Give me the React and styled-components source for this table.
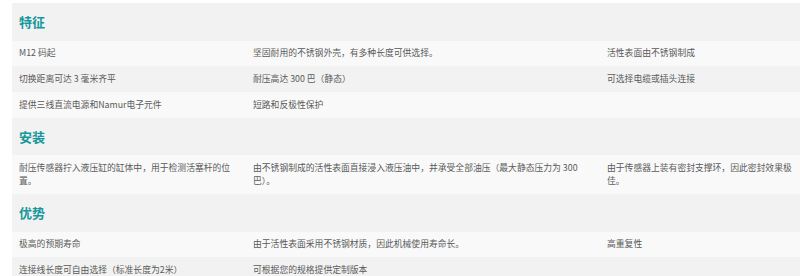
import React from "react";
import styled, { createGlobalStyle } from "styled-components";

const Global = createGlobalStyle`
  html, body { margin: 0; padding: 0; background: #ffffff; }
  body { font-family: "Noto Sans CJK SC", "Noto Sans", sans-serif; }
`;

const Page = styled.div`
  padding: 3px 0 0 12px;
`;

const Table = styled.table`
  width: 788px;
  border-collapse: collapse;
  table-layout: fixed;
`;

const Col = styled.col`
  width: ${(p) => p.$w}px;
`;

const SectionRow = styled.tr`
  background: #f2f2f2;
`;

const SectionTitle = styled.th`
  text-align: left;
  padding: 9.8px 7px;
  font-size: 13px;
  line-height: 18px;
  font-weight: 700;
  color: #16979c;
`;

const Row = styled.tr`
  background: ${(p) => (p.$alt ? "#f2f2f2" : "#f9f9f9")};
`;

const Cell = styled.td`
  padding: 6.5px 7px;
  font-size: 8.8px;
  line-height: 12.75px;
  color: #5a5a5a;
  vertical-align: top;
`;

const sections = [
  {
    title: "特征",
    rows: [
      ["M12 码起", "坚固耐用的不锈钢外壳，有多种长度可供选择。", "活性表面由不锈钢制成"],
      ["切换距离可达 3 毫米齐平", "耐压高达 300 巴（静态）", "可选择电缆或插头连接"],
      ["提供三线直流电源和Namur电子元件", "短路和反极性保护", ""],
    ],
  },
  {
    title: "安装",
    rows: [
      [
        "耐压传感器拧入液压缸的缸体中，用于检测活塞杆的位置。",
        "由不锈钢制成的活性表面直接浸入液压油中，并承受全部油压（最大静态压力为 300 巴）。",
        "由于传感器上装有密封支撑环，因此密封效果极佳。",
      ],
    ],
  },
  {
    title: "优势",
    rows: [
      ["极高的预期寿命", "由于活性表面采用不锈钢材质，因此机械使用寿命长。", "高重复性"],
      ["连接线长度可自由选择（标准长度为2米）", "可根据您的规格提供定制版本", ""],
    ],
  },
];

export default function App() {
  return (
    <>
      <Global />
      <Page>
        <Table>
          <colgroup>
            <Col $w={234} />
            <Col $w={354} />
            <Col $w={200} />
          </colgroup>
          <tbody>
            {sections.map((s) => (
              <React.Fragment key={s.title}>
                <SectionRow>
                  <SectionTitle colSpan={3}>{s.title}</SectionTitle>
                </SectionRow>
                {s.rows.map((r, i) => (
                  <Row key={i} $alt={i % 2 === 1}>
                    {r.map((c, j) => (
                      <Cell key={j}>{c}</Cell>
                    ))}
                  </Row>
                ))}
              </React.Fragment>
            ))}
          </tbody>
        </Table>
      </Page>
    </>
  );
}
